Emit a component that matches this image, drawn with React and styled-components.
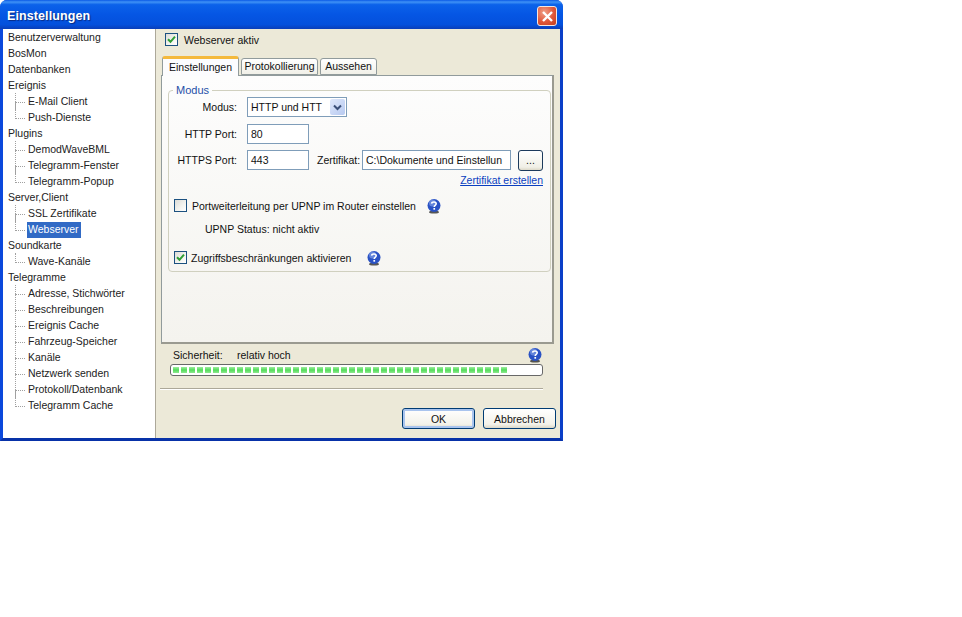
import React from 'react';
import styled, { createGlobalStyle } from 'styled-components';

const GlobalStyle = createGlobalStyle`
  html, body { margin: 0; padding: 0; background: #fff; }
  body { font-family: "Liberation Sans", Arial, sans-serif; font-size: 10.5px; color: #111; }
`;

const Page = styled.div`
  width: 962px;
  height: 617px;
  background: #fff;
  overflow: hidden;
`;

const Window = styled.div`
  width: 563px;
  height: 441px;
  display: flex;
  flex-direction: column;
  box-sizing: border-box;
  background: #0a3fd0;
  border-radius: 7px 7px 0 0;
  border-bottom: 3px solid #0832a8;
  border-left: 3px solid #0b48dc;
  border-right: 3px solid #0b3fc8;
`;

const TitleBar = styled.div`
  height: 29px;
  box-sizing: border-box;
  margin: 0 -3px;
  flex: none;
  display: flex;
  align-items: center;
  justify-content: space-between;
  padding: 3px 6px 0 7px;
  border-radius: 7px 7px 0 0;
  background: linear-gradient(180deg, #0a5ae6 0%, #3f92f6 7%, #0b62ea 16%, #0556e4 50%, #0450dc 85%, #0a3eb8 100%);
`;

const Title = styled.span`
  color: #fff;
  font-family: "Liberation Sans", Arial, sans-serif;
  font-weight: bold;
  font-size: 12.5px;
  letter-spacing: 0.1px;
  text-shadow: 1px 1px 1px #0a2a80;
`;

const CloseButton = styled.div`
  width: 18px;
  height: 18px;
  border: 1px solid #f4e6e0;
  border-radius: 3px;
  background: radial-gradient(circle at 35% 30%, #f0a088 0%, #e0573a 55%, #c23c1c 100%);
  display: flex;
  align-items: center;
  justify-content: center;
`;

const Body = styled.div`
  flex: 1;
  display: flex;
  min-height: 0;
  background: #ece9d8;
`;

const Sidebar = styled.div`
  width: 153px;
  flex: none;
  background: #fff;
  border-right: 1px solid #aca899;
  padding-top: 1px;
  box-sizing: border-box;
`;

const TreeRow = styled.div`
  height: 16px;
  display: flex;
  align-items: center;
  padding-left: ${({ $child }) => ($child ? '11px' : '4px')};
  position: relative;
`;

const TreeLines = styled.span`
  width: 13px;
  height: 16px;
  flex: none;
  position: relative;
  &::before {
    content: '';
    position: absolute;
    left: 1px;
    top: ${({ $first }) => ($first ? '-1px' : '-8px')};
    bottom: ${({ $last }) => ($last ? '7px' : '0')};
    border-left: 1px dotted #a0a0a0;
  }
  &::after {
    content: '';
    position: absolute;
    left: 2px;
    top: 8px;
    width: 9px;
    border-top: 1px dotted #a0a0a0;
  }
`;

const TreeLabel = styled.span`
  padding: 1px 2px 2px 1px;
  line-height: 13px;
  white-space: nowrap;
  color: ${({ $selected }) => ($selected ? '#fff' : '#222')};
  background: ${({ $selected }) => ($selected ? '#316ac5' : 'transparent')};
`;

const Main = styled.div`
  flex: 1;
  display: flex;
  flex-direction: column;
  padding: 0 4px 0 5px;
  min-width: 0;
`;

const ActiveRow = styled.div`
  height: 26px;
  box-sizing: border-box;
  padding: 0 0 5px 4px;
  display: flex;
  align-items: center;
  gap: 6px;
  flex: none;
`;

const CheckBox = styled.span`
  width: 11px;
  height: 11px;
  flex: none;
  border: 1px solid #1c5180;
  background: linear-gradient(135deg, #dcdcd7 0%, #f4f4f0 60%, #fff 100%);
  display: flex;
  align-items: center;
  justify-content: center;
`;

const TabStrip = styled.div`
  display: flex;
  align-items: flex-end;
  height: 20px;
  flex: none;
  padding-left: 1px;
  gap: 2px;
`;

const Tab = styled.div`
  height: ${({ $active }) => ($active ? '20px' : '17px')};
  width: ${({ $w }) => $w}px;
  box-sizing: border-box;
  padding-bottom: 2px;
  display: flex;
  align-items: center;
  justify-content: center;
  border: 1px solid #919b9c;
  border-bottom: ${({ $active }) => ($active ? 'none' : '1px solid #919b9c')};
  border-top: ${({ $active }) => ($active ? '3px solid #f4b93c' : '1px solid #919b9c')};
  border-radius: 3px 3px 0 0;
  background: ${({ $active }) => ($active ? '#fcfcfe' : 'linear-gradient(180deg, #fff 0%, #f1f0e8 100%)')};
  position: relative;
  margin-bottom: ${({ $active }) => ($active ? '-1px' : '0')};
  z-index: ${({ $active }) => ($active ? 1 : 0)};
`;

const TabPanel = styled.div`
  width: 393px;
  height: 269px;
  flex: none;
  box-sizing: border-box;
  border: 1px solid #919b9c;
  border-right: 2px solid #9a9a90;
  border-bottom: 2px solid #9a9a90;
  background: linear-gradient(180deg, #fdfdfd 0%, #f4f3ee 100%);
  padding: 8px 1px 0 6px;
`;

const GroupBox = styled.fieldset`
  margin: 0;
  padding: 0;
  height: 188px;
  box-sizing: border-box;
  border: 1px solid #d0d0bf;
  border-radius: 4px;
  position: relative;
`;

const Legend = styled.legend`
  color: #1f4fa8;
  margin-left: 4px;
  padding: 0 3px;
  font-size: 11px;
  line-height: 12px;
`;

const FormRow = styled.div`
  display: flex;
  align-items: center;
  height: 20px;
  margin-top: ${({ $top }) => $top || 0}px;
`;

const FieldLabel = styled.span`
  width: 68px;
  flex: none;
  text-align: right;
  margin-right: 10px;
  white-space: nowrap;
`;

const TextField = styled.div`
  width: ${({ $w }) => $w}px;
  height: 20px;
  box-sizing: border-box;
  flex: none;
  background: #fff;
  border: 1px solid #7f9db9;
  padding-left: 3px;
  display: flex;
  align-items: center;
  white-space: nowrap;
  overflow: hidden;
`;

const SelectBox = styled(TextField)`
  justify-content: space-between;
  padding-right: 1px;
`;

const SelectArrow = styled.span`
  width: 15px;
  height: 16px;
  background: linear-gradient(135deg, #dfe8fb 0%, #b7c9f0 100%);
  border-radius: 2px;
  display: flex;
  align-items: center;
  justify-content: center;
  flex: none;
`;

const InlineLabel = styled.span`
  margin-left: 8px;
  width: 45px;
  flex: none;
  white-space: nowrap;
`;

const DotsButton = styled.div`
  width: 25px;
  height: 21px;
  margin-left: 7px;
  box-sizing: border-box;
  border: 1px solid #1c3a5c;
  border-radius: 3px;
  background: linear-gradient(180deg, #fff 0%, #f0efe6 85%, #dcd8c8 100%);
  display: flex;
  align-items: center;
  justify-content: center;
`;

const LinkRow = styled.div`
  display: flex;
  justify-content: flex-end;
  padding-right: 7px;
  margin-top: 3px;
  height: 13px;
  align-items: center;
`;

const CertLink = styled.a`
  color: #0a3fc0;
  text-decoration: underline;
`;

const CheckRow = styled.div`
  display: flex;
  align-items: center;
  padding-left: 5px;
  margin-top: ${({ $top }) => $top}px;
  height: 15px;
  gap: ${({ $gap }) => $gap}px;
`;

const HelpWrap = styled.span`
  margin-left: ${({ $left }) => $left}px;
  display: inline-flex;
  flex: none;
`;

const StatusText = styled.div`
  padding-left: 36px;
  margin-top: 9px;
  height: 14px;
  line-height: 14px;
`;

const SecurityRow = styled.div`
  width: 370px;
  height: 15px;
  margin: 3px 0 0 12px;
  display: flex;
  align-items: center;
  flex: none;
  justify-content: space-between;
`;

const SecurityText = styled.span`
  display: flex;
`;

const SecurityName = styled.span`
  width: 64px;
`;

const ProgressTrack = styled.div`
  width: 373px;
  height: 12px;
  box-sizing: border-box;
  margin-left: 9px;
  margin-top: 2px;
  flex: none;
  border: 1px solid #686868;
  border-radius: 3px;
  background: #fff;
  padding: 2px 2px;
  display: flex;
  gap: 2px;
`;

const ProgressCell = styled.span`
  width: 6px;
  height: 6px;
  flex: none;
  background: linear-gradient(180deg, #a0eca0 0%, #52dc5a 50%, #90e890 100%);
`;

const Separator = styled.div`
  width: 383px;
  margin-top: 12px;
  margin-left: -1px;
  flex: none;
  border-top: 1px solid #aca899;
  border-bottom: 1px solid #fff;
`;

const ButtonRow = styled.div`
  display: flex;
  justify-content: flex-end;
  gap: 8px;
  margin-top: 18px;
  flex: none;
`;

const DialogButton = styled.div`
  width: 73px;
  height: 21px;
  box-sizing: border-box;
  display: flex;
  align-items: center;
  justify-content: center;
  border: 1px solid #003c74;
  border-radius: 3px;
  background: linear-gradient(180deg, #fff 0%, #f3f2ea 80%, #dcd8c8 100%);
  box-shadow: ${({ $default }) => ($default ? 'inset 0 0 0 2px #a9c4ee' : 'none')};
`;

const treeItems = [
  ['Benutzerverwaltung'],
  ['BosMon'],
  ['Datenbanken'],
  ['Ereignis'],
  ['E-Mail Client', 'first'],
  ['Push-Dienste', 'last'],
  ['Plugins'],
  ['DemodWaveBML', 'first'],
  ['Telegramm-Fenster', 'mid'],
  ['Telegramm-Popup', 'last'],
  ['Server,Client'],
  ['SSL Zertifikate', 'first'],
  ['Webserver', 'last', true],
  ['Soundkarte'],
  ['Wave-Kanäle', 'single'],
  ['Telegramme'],
  ['Adresse, Stichwörter', 'first'],
  ['Beschreibungen', 'mid'],
  ['Ereignis Cache', 'mid'],
  ['Fahrzeug-Speicher', 'mid'],
  ['Kanäle', 'mid'],
  ['Netzwerk senden', 'mid'],
  ['Protokoll/Datenbank', 'mid'],
  ['Telegramm Cache', 'last'],
];

const CheckMark = () => (
  <svg width="9" height="9" viewBox="0 0 9 9">
    <path d="M1 4.2 L3.5 6.8 L8 1.6" fill="none" stroke="#2f9e35" strokeWidth="2" />
  </svg>
);

const HelpIcon = () => (
  <svg width="16" height="16" viewBox="0 0 16 16">
    <ellipse cx="8" cy="14.2" rx="5" ry="1.4" fill="#222" opacity="0.75" />
    <circle cx="8" cy="7.5" r="6.5" fill="#2a52c4" />
    <circle cx="6.5" cy="5" r="3.5" fill="#7d9be6" opacity="0.7" />
    <path d="M5.6 5.6 C5.8 3.6 10.2 3.4 10.2 5.8 C10.2 7.4 8.2 7.2 8.2 9" fill="none" stroke="#fff" strokeWidth="1.6" />
    <rect x="7.4" y="10" width="1.7" height="1.7" fill="#fff" />
  </svg>
);

export default function App() {
  return (
    <Page>
      <GlobalStyle />
      <Window>
        <TitleBar>
          <Title>Einstellungen</Title>
          <CloseButton>
            <svg width="13" height="13" viewBox="0 0 13 13">
              <path d="M2 2 L11 11 M11 2 L2 11" stroke="#fff" strokeWidth="2.4" />
            </svg>
          </CloseButton>
        </TitleBar>
        <Body>
          <Sidebar>
            {treeItems.map(([label, kind, selected]) => (
              <TreeRow key={label} $child={!!kind}>
                {kind && <TreeLines $first={kind === 'first' || kind === 'single'} $last={kind === 'last' || kind === 'single'} />}
                <TreeLabel $selected={selected}>{label}</TreeLabel>
              </TreeRow>
            ))}
          </Sidebar>
          <Main>
            <ActiveRow>
              <CheckBox><CheckMark /></CheckBox>
              <span>Webserver aktiv</span>
            </ActiveRow>
            <TabStrip>
              <Tab $active $w={77}>Einstellungen</Tab>
              <Tab $w={77}>Protokollierung</Tab>
              <Tab $w={57}>Aussehen</Tab>
            </TabStrip>
            <TabPanel>
              <GroupBox>
                <Legend>Modus</Legend>
                <FormRow $top={1}>
                  <FieldLabel>Modus:</FieldLabel>
                  <SelectBox $w={100}>
                    HTTP und HTT
                    <SelectArrow>
                      <svg width="9" height="7" viewBox="0 0 9 7">
                        <path d="M1 1.5 L4.5 5 L8 1.5" fill="none" stroke="#3a4f78" strokeWidth="2" />
                      </svg>
                    </SelectArrow>
                  </SelectBox>
                </FormRow>
                <FormRow $top={7}>
                  <FieldLabel>HTTP Port:</FieldLabel>
                  <TextField $w={62}>80</TextField>
                </FormRow>
                <FormRow $top={6}>
                  <FieldLabel>HTTPS Port:</FieldLabel>
                  <TextField $w={62}>443</TextField>
                  <InlineLabel>Zertifikat:</InlineLabel>
                  <TextField $w={149}>C:\Dokumente und Einstellun</TextField>
                  <DotsButton>...</DotsButton>
                </FormRow>
                <LinkRow>
                  <CertLink>Zertifikat erstellen</CertLink>
                </LinkRow>
                <CheckRow $top={12} $gap={5}>
                  <CheckBox />
                  <span>Portweiterleitung per UPNP im Router einstellen</span>
                  <HelpWrap $left={5}><HelpIcon /></HelpWrap>
                </CheckRow>
                <StatusText>UPNP Status: nicht aktiv</StatusText>
                <CheckRow $top={14} $gap={4}>
                  <CheckBox><CheckMark /></CheckBox>
                  <span>Zugriffsbeschränkungen aktivieren</span>
                  <HelpWrap $left={11}><HelpIcon /></HelpWrap>
                </CheckRow>
              </GroupBox>
            </TabPanel>
            <SecurityRow>
              <SecurityText>
                <SecurityName>Sicherheit:</SecurityName>
                <span>relativ hoch</span>
              </SecurityText>
              <HelpIcon />
            </SecurityRow>
            <ProgressTrack>
              {Array.from({ length: 42 }).map((_, i) => <ProgressCell key={i} />)}
            </ProgressTrack>
            <Separator />
            <ButtonRow>
              <DialogButton $default>OK</DialogButton>
              <DialogButton>Abbrechen</DialogButton>
            </ButtonRow>
          </Main>
        </Body>
      </Window>
    </Page>
  );
}
